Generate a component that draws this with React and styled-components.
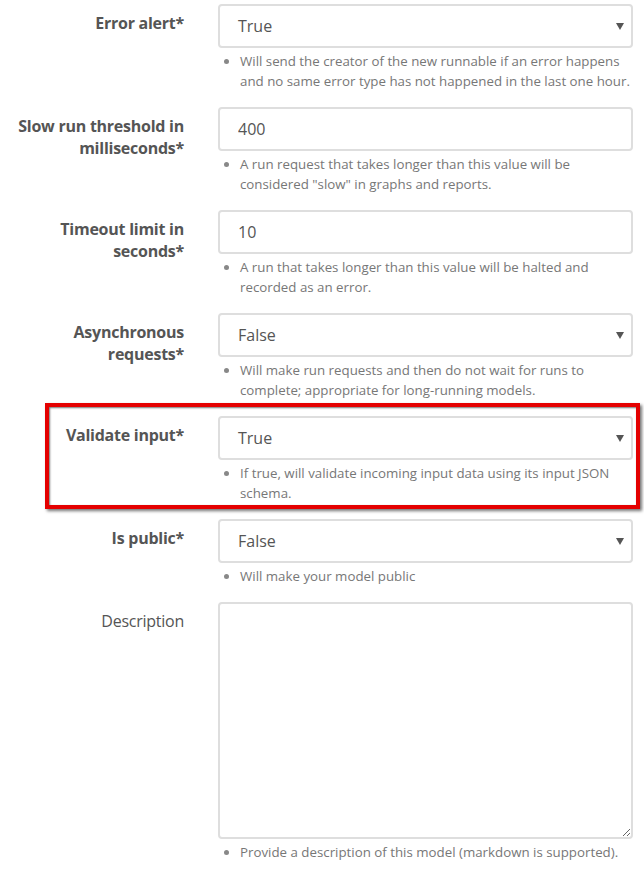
import React from 'react';
import styled, { createGlobalStyle } from 'styled-components';

const GlobalStyle = createGlobalStyle`
  body {
    margin: 0;
    background: #fff;
    font-family: 'Open Sans', 'Liberation Sans', sans-serif;
  }
`;

const Form = styled.form`
  width: 644px;
  padding: 4px 11px 0 0;
  box-sizing: border-box;
`;

const Row = styled.div`
  position: relative;
  display: grid;
  grid-template-columns: 184px 1fr;
  column-gap: 34px;
  margin-bottom: 16px;
`;

const Label = styled.label`
  padding: 8px 0 0 8px;
  text-align: right;
  color: #555;
  font-size: 16px;
  line-height: 22px;
  letter-spacing: -0.25px;
  font-weight: ${p => (p.$required ? 700 : 400)};
`;

const Field = styled.div`
  display: flex;
  flex-direction: column;
  min-width: 0;
`;

const boxBase = `
  box-sizing: border-box;
  width: 100%;
  border: 2px solid #dedede;
  border-radius: 4px;
  background: #fff;
  color: #555;
  font-family: 'Open Sans', 'Liberation Sans', sans-serif;
  font-size: 16px;
`;

const SelectBox = styled.div`
  ${boxBase}
  height: 44px;
  padding: 0 7px 0 18px;
  display: flex;
  align-items: center;
  justify-content: space-between;
`;

const TextInput = styled.input`
  ${boxBase}
  height: 44px;
  padding: 0 18px;
  outline: none;
`;

const TextArea = styled.textarea`
  ${boxBase}
  height: 237px;
  padding: 10px 18px;
  outline: none;
  resize: vertical;
`;

const Help = styled.ul`
  margin: 3px 0 0;
  padding-left: 22px;
  color: #777;
  font-size: 13.3px;
  line-height: 20px;
  li::marker {
    color: #888;
  }
`;

const Highlight = styled.div`
  position: absolute;
  top: -13px;
  left: 45px;
  width: 595px;
  height: 106px;
  box-sizing: border-box;
  border: 4px solid #e40000;
  box-shadow: 2px 2px 3px rgba(0, 0, 0, 0.55), inset 1px 1px 2px rgba(0, 0, 0, 0.55);
  pointer-events: none;
`;

const Caret = () => (
  <svg width="8" height="7" viewBox="0 0 8 7">
    <path d="M0 0 L8 0 L4 7 Z" fill="#555" />
  </svg>
);

const Select = ({ value }) => (
  <SelectBox>
    <span>{value}</span>
    <Caret />
  </SelectBox>
);

const fields = [
  { label: 'Error alert*', type: 'select', value: 'True', help: 'Will send the creator of the new runnable if an error happens and no same error type has not happened in the last one hour.' },
  { label: 'Slow run threshold in milliseconds*', type: 'input', value: '400', help: 'A run request that takes longer than this value will be considered "slow" in graphs and reports.' },
  { label: 'Timeout limit in seconds*', type: 'input', value: '10', help: 'A run that takes longer than this value will be halted and recorded as an error.' },
  { label: 'Asynchronous requests*', type: 'select', value: 'False', help: 'Will make run requests and then do not wait for runs to complete; appropriate for long-running models.' },
  { label: 'Validate input*', type: 'select', value: 'True', help: 'If true, will validate incoming input data using its input JSON schema.', highlight: true },
  { label: 'Is public*', type: 'select', value: 'False', help: 'Will make your model public' },
];

export default function App() {
  return (
    <>
      <GlobalStyle />
      <Form onSubmit={e => e.preventDefault()}>
        {fields.map(f => (
          <Row key={f.label}>
            <Label $required>{f.label}</Label>
            <Field>
              {f.type === 'select' ? (
                <Select value={f.value} />
              ) : (
                <TextInput defaultValue={f.value} />
              )}
              <Help>
                <li>{f.help}</li>
              </Help>
            </Field>
            {f.highlight && <Highlight />}
          </Row>
        ))}
        <Row>
          <Label>Description</Label>
          <Field>
            <TextArea />
            <Help>
              <li>Provide a description of this model (markdown is supported).</li>
            </Help>
          </Field>
        </Row>
      </Form>
    </>
  );
}
